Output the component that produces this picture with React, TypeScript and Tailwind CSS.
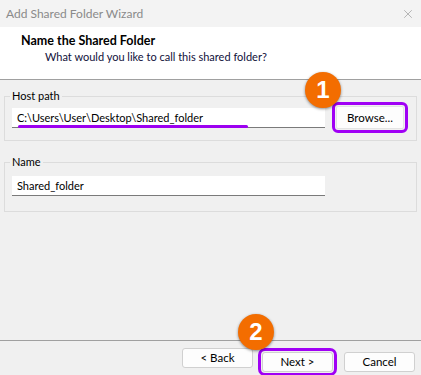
import { X } from "lucide-react";

const font = { fontFamily: 'Lato, "Noto Sans", sans-serif' };

function Badge({ n, className }: { n: string; className: string }) {
  return (
    <div
      className={`absolute w-[36px] h-[36px] rounded-full bg-[#f36d00] flex items-center justify-center text-white text-[24px] font-bold shadow-[0_1px_3px_rgba(0,0,0,0.45)] ${className}`}
      style={{ fontFamily: '"Liberation Sans", Arial, sans-serif' }}
    >
      {n}
    </div>
  );
}

function Btn({ label, marked }: { label: string; marked?: boolean }) {
  return (
    <button
      type="button"
      className={`w-[71px] h-[20px] rounded-[3px] border border-[#d0d0d0] bg-[#fdfdfd] text-[11.5px] text-black leading-none ${
        marked ? "outline-[3px] outline-solid outline-[#a000f5] outline-offset-[1px]" : ""
      }`}
    >
      {label}
    </button>
  );
}

export default function App() {
  return (
    <div className="relative w-[421px] h-[375px] flex flex-col bg-[#f0f0f0] text-black overflow-hidden" style={font}>
      {/* title bar */}
      <div className="h-[27px] flex items-center justify-between pl-[6px] pr-[6px] bg-[#f3f3f3]">
        <span className="text-[12px] text-[#8a8a8a]">Add Shared Folder Wizard</span>
        <X size={14} strokeWidth={1} className="text-[#888]" />
      </div>

      {/* header */}
      <div className="h-[53px] bg-white border-b border-[#a0a0a0] pt-[6px] pl-[21px]">
        <div className="text-[12.5px] leading-[16px] font-bold">Name the Shared Folder</div>
        <div className="text-[11px] leading-[16px] pl-[24px] text-[#10103a]">What would you like to call this shared folder?</div>
      </div>

      {/* body */}
      <div className="flex-1 flex flex-col">
        <fieldset className="mt-[8px] ml-[4px] w-[413px] border border-[#dcdcdc] pl-[7px] pt-[2px] pb-[11px]">
          <legend className="-ml-[2px] px-[2px] text-[11px] leading-[16px]">Host path</legend>
          <div className="flex items-center">
            <div className="relative w-[313px] h-[20px] bg-white border-b border-[#7a7a7a] pl-[5px] text-[11px] leading-[19px]">
              C:\Users\User\Desktop\Shared_folder
              <div className="absolute left-[6px] top-[17px] w-[230px] h-[3px] rounded-full bg-[#9c00f0]" />
            </div>
            <button
              type="button"
              className="ml-[11px] w-[68px] h-[23px] border border-[#e4e4e4] bg-[#fdfdfd] text-[11.5px] leading-none rounded-[2px] outline-[3px] outline-solid outline-[#a000f5] outline-offset-[1px]"
            >
              Browse...
            </button>
          </div>
        </fieldset>

        <fieldset className="mt-[13px] ml-[4px] w-[413px] border border-[#dcdcdc] pl-[7px] pt-[6px] pb-[15px]">
          <legend className="-ml-[2px] px-[2px] text-[11px] leading-[16px]">Name</legend>
          <div className="w-[313px] h-[20px] bg-white border-b border-[#7a7a7a] pl-[5px] text-[11px] leading-[19px]">
            Shared_folder
          </div>
        </fieldset>
      </div>

      {/* footer */}
      <div className="h-[35px] border-t border-[#a0a0a0] flex items-start justify-end pt-[7px] pr-[6px]">
        <Btn label="< Back" />
        <div className="ml-[9px]">
          <Btn label="Next >" marked />
        </div>
        <div className="ml-[11px]">
          <Btn label="Cancel" />
        </div>
      </div>

      <Badge n="1" className="left-[305px] top-[72px]" />
      <Badge n="2" className="left-[238px] top-[314px]" />
    </div>
  );
}
